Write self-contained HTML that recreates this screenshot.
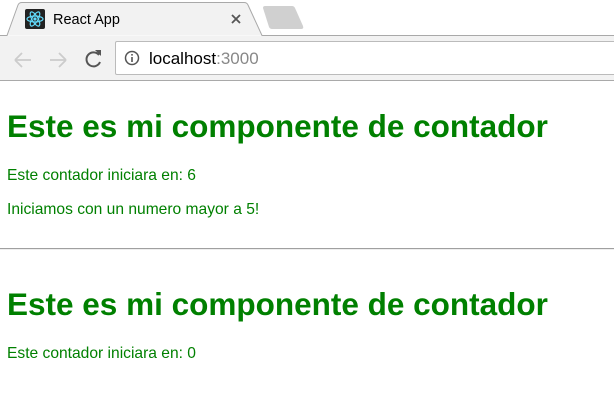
<!DOCTYPE html>
<html><head><style>
*{margin:0;padding:0;box-sizing:border-box}
body{width:614px;height:405px;overflow:hidden;background:#fff;font-family:"Liberation Sans",Arial,sans-serif;position:relative}
.a{position:absolute}
h1{position:absolute;left:7px;font-size:31.5px;font-weight:bold;color:#008000;white-space:nowrap;line-height:1}
p{position:absolute;left:7px;font-size:15.6px;color:#008000;white-space:nowrap;line-height:1}
</style></head><body>
<div class="a" style="left:0;top:0;width:614px;height:36px;background:#fff"></div>
<svg class="a" style="left:0;top:0" width="320" height="37">
<path d="M0 35.5 H7 L18 5 Q19 2.5 22 2.5 H244 Q247 2.5 248 5 L262 35.5 H320" fill="#f2f2f2" stroke="#a9a9a9" stroke-width="1"/>
<path d="M263 8 Q263 6 265 6 H292 Q294 6 295 8 L303 26 Q304 29 301 29 H272 Q270 29 269 27 Z" fill="#d0d0d0"/>
<rect x="25" y="9" width="20" height="20" rx="2" fill="#222"/>
<g fill="none" stroke="#61dafb" stroke-width="1.2"><ellipse cx="35" cy="19" rx="8" ry="3"/><ellipse cx="35" cy="19" rx="8" ry="3" transform="rotate(60 35 19)"/><ellipse cx="35" cy="19" rx="8" ry="3" transform="rotate(-60 35 19)"/></g>
<circle cx="35" cy="19" r="1.6" fill="#61dafb"/>
<text x="53" y="24" font-family="Liberation Sans" font-size="14.5" fill="#000">React App</text>
<path d="M232 15 L240 23 M240 15 L232 23" stroke="#555" stroke-width="1.8"/>
</svg>
<div class="a" style="left:320px;top:35px;width:294px;height:1px;background:#a9a9a9"></div>
<div class="a" style="left:0;top:36px;width:614px;height:45px;background:#f2f2f2;border-bottom:1px solid #a9a9a9"></div>
<svg class="a" style="left:0;top:36px" width="115" height="45">
<path d="M15 24 H31 M15 24 L22 17 M15 24 L22 31" stroke="#ccc" stroke-width="1.8" fill="none"/>
<path d="M50 24 H66 M66 24 L59 17 M66 24 L59 31" stroke="#ccc" stroke-width="1.8" fill="none"/>
<path d="M99 19 A7 7 0 1 0 100 26" stroke="#555" stroke-width="2" fill="none"/>
<path d="M95 14 L101 14 L101 20 Z" fill="#555"/>
</svg>
<div class="a" style="left:115px;top:41px;width:510px;height:34px;background:#fff;border:1px solid #bbb;border-radius:2px"></div>
<svg class="a" style="left:124px;top:50px" width="16" height="16"><circle cx="8" cy="8" r="6.5" fill="none" stroke="#555" stroke-width="1.5"/><rect x="7.2" y="7" width="1.6" height="5" fill="#555"/><rect x="7.2" y="4" width="1.6" height="1.6" fill="#555"/></svg>
<div class="a" style="left:149px;top:49px;font-size:17px;color:#000">localhost<span style="color:#888">:3000</span></div>
<h1 style="top:111px">Este es mi componente de contador</h1>
<p style="top:168px">Este contador iniciara en: 6</p>
<p style="top:202px">Iniciamos con un numero mayor a 5!</p>
<div class="a" style="left:0;top:248px;width:614px;height:2px;border-top:1px solid #a0a0a0;border-bottom:1px solid #eee"></div>
<h1 style="top:289px">Este es mi componente de contador</h1>
<p style="top:346px">Este contador iniciara en: 0</p>
</body></html>
